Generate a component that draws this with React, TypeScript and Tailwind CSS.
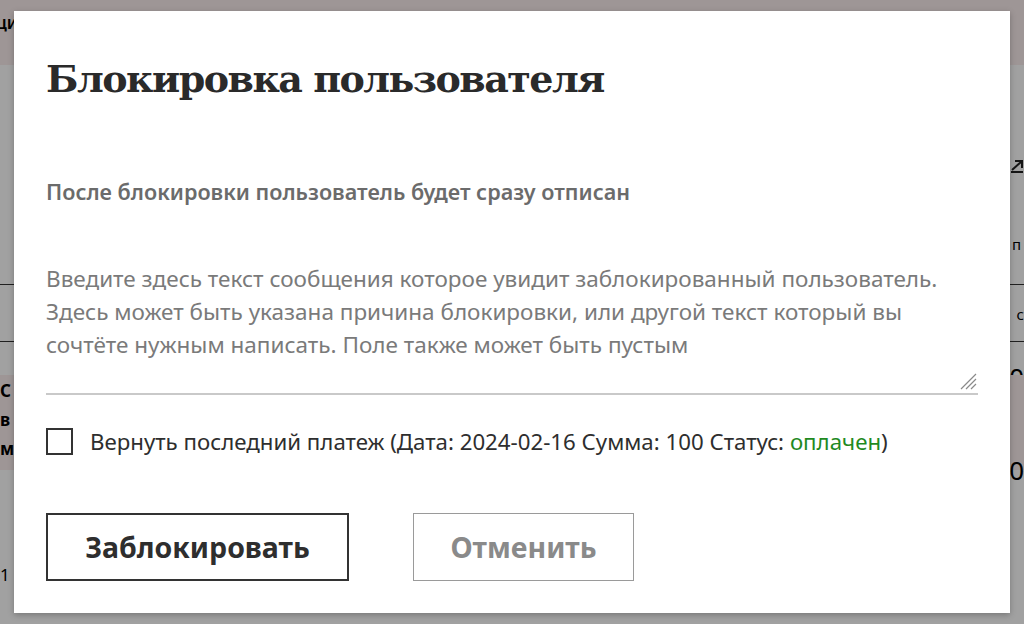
import { useState } from "react";

const sans = "font-['Noto_Sans',_'Open_Sans',_sans-serif]";

function BackdropPage() {
  // страница под модалкой — видны только края слева и справа
  return (
    <div className={`flex h-full w-full flex-col bg-white text-black ${sans}`}>
      <div className="flex h-[65px] items-start justify-between bg-[#fbeeee] pt-[14px]">
        <span className="-ml-[4px] text-[17px] font-semibold leading-none">ци</span>
        <span />
      </div>
      <div className="flex h-[220px] justify-between border-b border-[#333]">
        <span />
        <div className="flex w-[12px] flex-col items-start pt-[94px]">
          <svg width="12" height="14" viewBox="0 0 12 14" className="-ml-[1px]">
            <path d="M1 11 L10 3 M4 2 H11 V9" stroke="#222" strokeWidth="2" fill="none" />
            <path d="M0 13 H12" stroke="#222" strokeWidth="2" />
          </svg>
          <span className="mt-[64px] text-[15px] leading-none">п</span>
        </div>
      </div>
      <div className="flex h-[57px] justify-between border-b border-[#333]">
        <span />
        <span className="pt-[22px] text-[15px] leading-none">с</span>
      </div>
      <div className="flex h-[33px] justify-between">
        <span />
        <span className="pt-[22px] text-[26px] leading-none">0</span>
      </div>
      <div className="flex h-[95px] justify-between bg-[#fbeeee]">
        <div className="flex flex-col pt-[1px] text-[17px] font-bold leading-[29px]">
          <span>С</span>
          <span>в</span>
          <span>м</span>
        </div>
        <span className="pt-[82px] text-[26px] leading-none">0</span>
      </div>
      <div className="flex flex-1 justify-between pt-[96px]">
        <span className="text-[17px] leading-none">1</span>
        <span />
      </div>
    </div>
  );
}

function ResizeGrip() {
  return (
    <svg width="20" height="20" viewBox="0 0 20 20" className="absolute bottom-[3px] right-[1px]">
      <path d="M19 4 L4 19 M19 9 L9 19 M19 14 L14 19" stroke="#8a8a8a" strokeWidth="1.2" />
    </svg>
  );
}

export default function App() {
  const [refund, setRefund] = useState(false);

  return (
    <div className="relative h-[624px] w-[1024px] overflow-hidden">
      <BackdropPage />
      <div className="absolute inset-0 flex items-center justify-center bg-black/[0.37]">
        <div className={`flex h-[602px] w-[996px] flex-col bg-white px-[32px] shadow-[0_2px_6px_rgba(0,0,0,0.25)] ${sans}`}>
          <h1 className="mt-[46px] font-['DejaVu_Serif',_serif] text-[38px] font-bold leading-[44px] tracking-[-0.04em] text-[#2a2a2a]">
            Блокировка пользователя
          </h1>

          <p className="mt-[77px] text-[21.6px] font-semibold leading-[28px] text-[#6b6b6b]">
            После блокировки пользователь будет сразу отписан
          </p>

          <div className="relative mt-[58px] border-b-2 border-[#c9c9c9]">
            <textarea
              className="block h-[129px] w-full resize-none bg-transparent pr-[24px] pt-0 text-[22.5px] leading-[33px] text-[#6f6f6f] outline-none placeholder:text-[#7a7a7a] -mt-[2px] mb-[2px]"
              placeholder="Введите здесь текст сообщения которое увидит заблокированный пользователь. Здесь может быть указана причина блокировки, или другой текст который вы сочтёте нужным написать. Поле также может быть пустым"
            />
            <ResizeGrip />
          </div>

          <label className="mt-[33px] flex cursor-pointer items-center gap-[17px] text-[22.25px] leading-[27px] text-[#2e2e2e]">
            <input
              type="checkbox"
              checked={refund}
              onChange={(e) => setRefund(e.target.checked)}
              className="peer sr-only"
            />
            <span className="flex h-[27px] w-[27px] shrink-0 items-center justify-center border-2 border-[#333] bg-white">
              {refund && <span className="h-[13px] w-[13px] bg-[#333]" />}
            </span>
            <span>
              Вернуть последний платеж (Дата: 2024-02-16 Сумма: 100 Статус:{" "}
              <span className="text-[#1f8a1f]">оплачен</span>)
            </span>
          </label>

          <div className="mt-[58px] flex gap-[64px]">
            <button className="h-[68px] w-[303px] border-2 border-[#333] bg-white text-[28.5px] font-bold text-[#2e2e2e]">
              Заблокировать
            </button>
            <button className="h-[68px] w-[221px] border-[1.5px] border-[#9a9a9a] bg-white text-[28.5px] font-bold text-[#8a8a8a]">
              Отменить
            </button>
          </div>
        </div>
      </div>
    </div>
  );
}
